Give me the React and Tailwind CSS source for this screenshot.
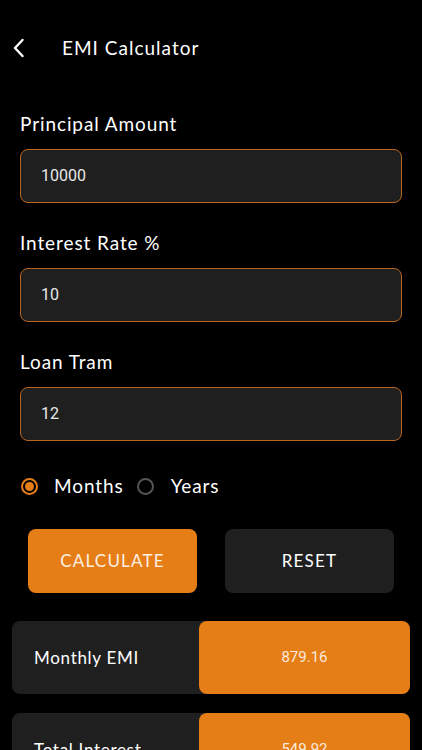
import { useState } from "react";

const Field = ({ label, value }) => (
  <div className="mb-[28px]">
    <div className="text-[19px] leading-[24px] text-white tracking-[0.9px] mb-[13px]">{label}</div>
    <div className="h-[54px] rounded-[8px] border border-[#b8661f] bg-[#1f1f1f] flex items-center px-[20px]">
      <span className="text-[16px] text-[#e8e8e8] font-['Roboto',sans-serif]">{value}</span>
    </div>
  </div>
);

const ResultRow = ({ label, value }) => (
  <div className="flex h-[73px] rounded-[8px] bg-[#1f1f1f] mb-[19px]">
    <div className="flex-1 flex items-center pl-[22px] text-[17px] text-white tracking-[0.7px]">{label}</div>
    <div className="w-[211px] rounded-[8px] bg-[#e67e17] flex items-center justify-center text-[15px] text-[#fbeadb] font-['Roboto',sans-serif]">
      {value}
    </div>
  </div>
);

export default function App() {
  const [unit, setUnit] = useState("months");

  return (
    <div className="w-[422px] h-[750px] overflow-hidden bg-black font-['Lato',sans-serif]">
      <div className="flex items-center h-[96px] pl-[12px]">
        <svg width="14" height="20" viewBox="0 0 14 20" fill="none" stroke="white" strokeWidth="2.4" strokeLinecap="round" strokeLinejoin="round">
          <path d="M10.5 2 L3 10 L10.5 18" />
        </svg>
        <h1 className="ml-[36px] text-[19px] text-white tracking-[1px]">EMI Calculator</h1>
      </div>

      <div className="px-[20px] pt-[16px]">
        <Field label="Principal Amount" value="10000" />
        <Field label="Interest Rate %" value="10" />
        <Field label="Loan Tram" value="12" />
      </div>

      <div className="flex items-center h-[24px] px-[21px] mt-[33px]">
        <button onClick={() => setUnit("months")} className="flex items-center">
          <span className={"w-[17px] h-[17px] rounded-full border-2 flex items-center justify-center " + (unit === "months" ? "border-[#e67e17]" : "border-[#555]")}>
            {unit === "months" && <span className="w-[9px] h-[9px] rounded-full bg-[#e67e17]" />}
          </span>
          <span className="ml-[16px] text-[19px] text-white tracking-[0.9px]">Months</span>
        </button>
        <button onClick={() => setUnit("years")} className="flex items-center ml-[13px]">
          <span className={"w-[17px] h-[17px] rounded-full border-2 flex items-center justify-center " + (unit === "years" ? "border-[#e67e17]" : "border-[#555]")}>
            {unit === "years" && <span className="w-[9px] h-[9px] rounded-full bg-[#e67e17]" />}
          </span>
          <span className="ml-[17px] text-[19px] text-white tracking-[0.9px]">Years</span>
        </button>
      </div>

      <div className="grid grid-cols-2 gap-[28px] px-[28px] mt-[31px]">
        <button className="h-[64px] rounded-[8px] bg-[#e67e17] text-[17px] text-[#fdf0e3] tracking-[1.2px]">CALCULATE</button>
        <button className="h-[64px] rounded-[8px] bg-[#1f1f1f] text-[17px] text-white tracking-[1.2px]">RESET</button>
      </div>

      <div className="px-[12px] mt-[28px]">
        <ResultRow label="Monthly EMI" value="879.16" />
        <ResultRow label="Total Interest" value="549.92" />
      </div>
    </div>
  );
}
